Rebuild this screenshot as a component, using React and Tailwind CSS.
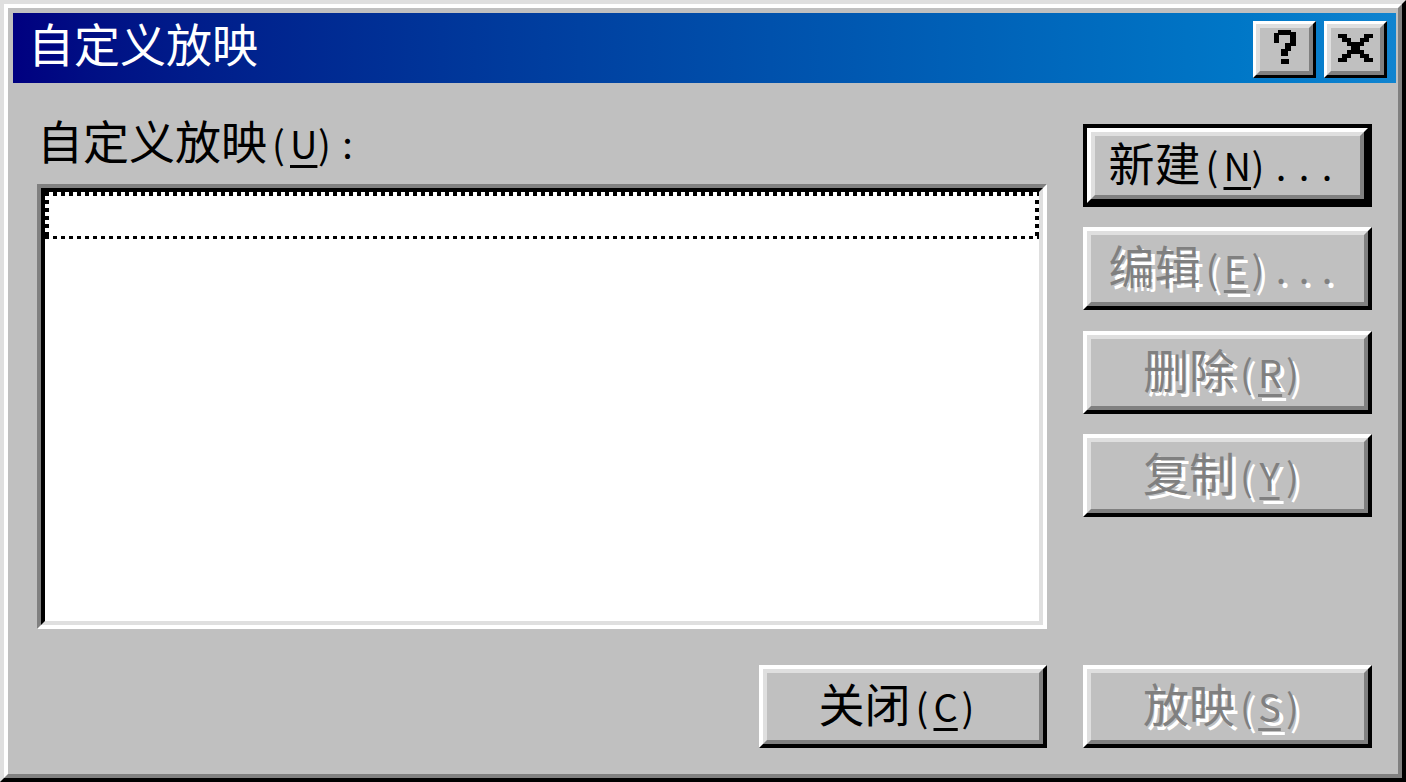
import React from 'react';

// half-width chars get a fixed 23px cell, like the bitmap font in the screenshot
const Label = ({ text, hot, disabled }) => (
  <span className={`whitespace-nowrap ${disabled ? 'text-[#808080] [text-shadow:4px_4px_0_#fff]' : 'text-black'}`}>
    {text.split('').map((ch, i) => {
      if (ch.charCodeAt(0) > 127) return <span key={i}>{ch}</span>;
      return (
        <span
          key={i}
          className={`inline-block w-[23px] text-center text-[38px] ${i === hot ? 'underline decoration-[3px] underline-offset-[6px]' : ''}`}
        >
          {ch === ' ' ? '\u00a0' : ch}
        </span>
      );
    })}
  </span>
);

const Button = ({ text, hot, def, disabled, width = 'w-[289px]' }) => (
  <div className={`${width} h-[83px] flex ${def ? 'border-4 border-black' : ''}`}>
    <div className="flex-1 flex border-4 border-t-white border-l-white border-r-black border-b-black">
      <div className="flex-1 flex items-center justify-center pr-[8px] pb-[6px] border-4 border-t-[#dfdfdf] border-l-[#dfdfdf] border-r-[#808080] border-b-[#808080] bg-[#c0c0c0] text-[46px] leading-[46px]">
        <Label text={text} hot={hot} disabled={disabled} />
      </div>
    </div>
  </div>
);

const CaptionButton = ({ children }) => (
  <div className="w-[63px] h-[57px] flex border-[3px] border-t-white border-l-white border-r-black border-b-black">
    <div className="flex-1 flex items-center justify-center pb-[6px] border-4 border-t-[#dfdfdf] border-l-[#dfdfdf] border-r-[#808080] border-b-[#808080] bg-[#c0c0c0]">
      {children}
    </div>
  </div>
);

const HelpGlyph = () => (
  <svg width="22" height="34" viewBox="0 0 22 34" shapeRendering="crispEdges">
    <rect x="4" y="0" width="13" height="5" fill="#000" />
    <rect x="0" y="3" width="5" height="10" fill="#000" />
    <rect x="16" y="2" width="6" height="14" fill="#000" />
    <rect x="11" y="13" width="6" height="8" fill="#000" />
    <rect x="7" y="19" width="7" height="7" fill="#000" />
    <rect x="7" y="29" width="8" height="5" fill="#000" />
  </svg>
);

const CloseGlyph = () => {
  const rows = ['11....11', '.11..11.', '..1111..', '...11...', '..1111..', '.11..11.', '11....11'];
  return (
    <svg width="35" height="28" viewBox="0 0 8 7" preserveAspectRatio="none" shapeRendering="crispEdges" className="mt-[2px]">
      {rows.map((r, y) =>
        r.split('').map((c, x) => (c === '1' ? <rect key={`${x}-${y}`} x={x} y={y} width="1" height="1" fill="#000" /> : null))
      )}
    </svg>
  );
};

const dotsH = 'bg-[repeating-linear-gradient(90deg,#000_0_4px,transparent_4px_8px)]';

const App = () => {
  return (
    <div className="w-[1406px] h-[782px] flex bg-[#c0c0c0] border-4 border-t-[#dfdfdf] border-l-[#dfdfdf] border-r-black border-b-black font-['Noto_Sans_CJK_SC','Noto_Sans_CJK_JP',sans-serif]">
      <div className="flex-1 flex flex-col pt-[5px] pl-[5px] pr-[2px] border-4 border-t-white border-l-white border-r-[#808080] border-b-[#808080]">
        {/* title bar */}
        <div className="h-[70px] flex items-start justify-between bg-linear-to-r from-[#000080] to-[#1084d0]">
          <div className="mt-[6px] pl-[15px] text-[46px] leading-[46px] text-white">自定义放映</div>
          <div className="mt-[8px] pr-[9px] flex gap-[8px]">
            <CaptionButton><HelpGlyph /></CaptionButton>
            <CaptionButton><CloseGlyph /></CaptionButton>
          </div>
        </div>

        {/* body */}
        <div className="flex-1 flex flex-col px-[24px] pt-[33px]">
          <div className="flex justify-between">
            <div className="w-[1010px] flex flex-col">
              <div className="h-[68px] text-[46px] leading-[46px]">
                <Label text="自定义放映(U):" hot={6} />
              </div>
              <div className="h-[445px] flex border-4 border-t-[#808080] border-l-[#808080] border-r-white border-b-white">
                <div className="flex-1 bg-white border-4 border-t-black border-l-black border-r-[#dfdfdf] border-b-[#dfdfdf]">
                  <div className="h-[47px] flex flex-col">
                    <div className={`h-[4px] ${dotsH}`} />
                    <div className="flex-1 flex justify-between">
                      <div className="w-[4px] bg-[repeating-linear-gradient(180deg,transparent_0_4px,#000_4px_8px)]" />
                      <div className="w-[4px] bg-[repeating-linear-gradient(180deg,transparent_0_4px,#000_4px_8px)]" />
                    </div>
                    <div className={`h-[3px] ${dotsH}`} />
                  </div>
                </div>
              </div>
            </div>

            <div className="w-[289px] mt-[8px] flex flex-col gap-[20px]">
              <Button text="新建(N)..." hot={3} def />
              <Button text="编辑(E)..." hot={3} disabled />
              <div className="mt-px">
                <Button text="删除(R)" hot={3} disabled />
              </div>
              <Button text="复制(Y)" hot={3} disabled />
            </div>
          </div>

          <div className="mt-[36px] flex justify-end gap-[36px]">
            <Button text="关闭(C)" hot={3} width="w-[288px]" />
            <Button text="放映(S)" hot={3} disabled />
          </div>
        </div>
      </div>
    </div>
  );
};

export default App;
